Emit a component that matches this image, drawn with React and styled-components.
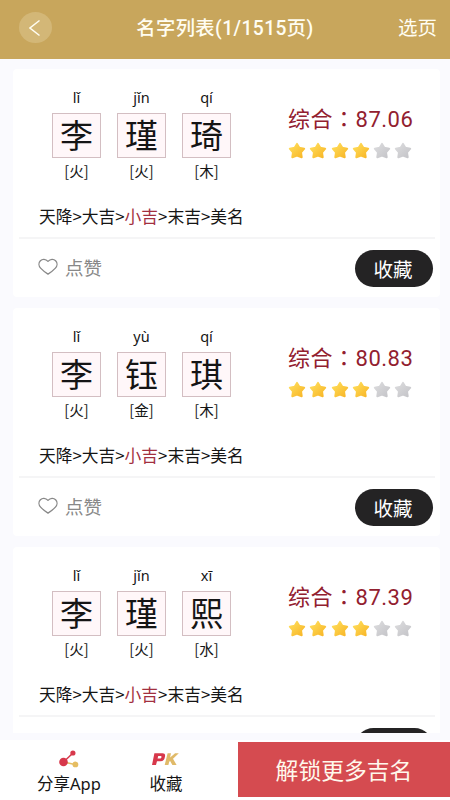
import React from 'react';
import styled, { createGlobalStyle } from 'styled-components';

const Global = createGlobalStyle`
  * { box-sizing: border-box; }
  body {
    margin: 0;
    background: #fff;
    font-family: "Noto Sans", "Noto Sans CJK SC", sans-serif;
    color: #151515;
  }
`;

const Page = styled.div`
  width: 450px;
  height: 800px;
  display: flex;
  flex-direction: column;
  overflow: hidden;
  background: #fafafe;
`;

const Header = styled.header`
  flex: none;
  height: 59px;
  padding: 0 13px 4px 19px;
  display: grid;
  grid-template-columns: 80px 1fr 80px;
  align-items: center;
  background: #c8a65c;
  color: #fffdf2;
  font-family: Roboto, "Noto Sans CJK SC", sans-serif;
  white-space: nowrap;
`;

const Back = styled.button`
  width: 33px;
  height: 31px;
  padding: 0;
  border: 0;
  border-radius: 50%;
  display: grid;
  place-items: center;
  background: #d3b777;
`;

const Title = styled.h1`
  margin: 2px 6px 0 0;
  text-align: center;
  font-size: 19.3px;
  font-weight: 500;
  line-height: 28px;
  letter-spacing: 0.4px;
`;

const PagePick = styled.span`
  margin-top: 2px;
  text-align: right;
  font-size: 19.5px;
  line-height: 28px;
`;

const List = styled.main`
  flex: none;
  height: 674px;
  padding: 10px 10px 0 13px;
  display: flex;
  flex-direction: column;
  gap: 11px;
  overflow: hidden;
`;

const Card = styled.article`
  flex: none;
  height: 228px;
  padding: 0 5px 0 6px;
  border-radius: 4px;
  background: #fff;
`;

const Summary = styled.div`
  height: 135px;
  padding: 18px 0 0 33px;
  display: flex;
`;

const Characters = styled.div`
  display: flex;
  gap: 16px;
`;

const Character = styled.div`
  width: 49px;
  display: flex;
  flex-direction: column;
  align-items: center;
`;

const Pinyin = styled.span`
  height: 26px;
  font-size: 14.5px;
  line-height: 20px;
`;

const Glyph = styled.div`
  width: 49px;
  height: 45px;
  border: 1px solid #d3bec2;
  background: #fff7f9;
  text-align: center;
  font-size: 33px;
  line-height: 44px;
`;

const Element = styled.span`
  font-family: "Noto Sans CJK SC", sans-serif;
  font-size: 14.5px;
  line-height: 26px;
`;

const Rating = styled.div`
  margin-left: 57px;
  padding-top: 14px;
  white-space: nowrap;
`;

const Score = styled.div`
  font-family: Roboto, "Noto Sans CJK SC", sans-serif;
  font-size: 22px;
  line-height: 32px;
  color: #92202f;
  letter-spacing: 0.5px;
`;

const Colon = styled.span`
  font-family: "Noto Sans CJK TC", sans-serif;
`;

const Stars = styled.div`
  margin-top: 6px;
  display: flex;
  gap: 3.3px;
`;

const Levels = styled.div`
  height: 33px;
  padding-left: 20px;
  font-family: "Noto Sans CJK SC", sans-serif;
  font-size: 16.75px;
  line-height: 24px;
  white-space: nowrap;
`;

const Current = styled.span`
  color: #a2303f;
`;

const Actions = styled.div`
  height: 60px;
  padding: 0 2px 0 19px;
  border-top: 2px solid #f5f5f6;
  display: flex;
  align-items: center;
  justify-content: space-between;
`;

const Like = styled.div`
  display: flex;
  align-items: center;
  gap: 7px;
  font-size: 18.5px;
  line-height: 26px;
  color: #888;

  svg { margin-bottom: 3px; }
`;

const SaveButton = styled.button`
  width: 78px;
  height: 37px;
  padding: 0 2px 0 0;
  border: 0;
  border-radius: 19px;
  background: #242324;
  color: #fff;
  font: 400 19.5px/35px "Noto Sans CJK SC", sans-serif;
`;

const Footer = styled.footer`
  flex: none;
  height: 67px;
  padding-top: 9px;
  display: flex;
  background: linear-gradient(#fafafe 7px, #fff 7px);
`;

const Tab = styled.div`
  width: ${(p) => p.$width}px;
  display: flex;
  flex-direction: column;
  align-items: center;
  font-size: 16.5px;
  line-height: 24px;
  white-space: nowrap;

  svg { margin: 8px 0 4px; }
`;

const Unlock = styled.button`
  margin-left: auto;
  width: 212px;
  height: 55px;
  padding: 0;
  border: 0;
  background: #d54b50;
  color: #fff8ec;
  font: 400 22.8px/55px "Noto Sans CJK SC", sans-serif;
`;

function Star({ on }) {
  return (
    <svg width="18" height="17" viewBox="0 0 18 17">
      <defs>
        <linearGradient id={on ? 'gold' : 'silver'} x1="0" y1="0" x2="1" y2="1">
          <stop offset="0" stopColor={on ? '#ffdf5c' : '#dcdcde'} />
          <stop offset="1" stopColor={on ? '#f8b526' : '#c4c4c8'} />
        </linearGradient>
      </defs>
      <path
        d="M9 1.9 L11.3 5.8 L16.2 6.7 L13 10.4 L13.7 15.2 L9 13.5 L4.3 15.2 L5 10.4 L1.8 6.7 L6.7 5.8 Z"
        fill={on ? 'url(#gold)' : 'url(#silver)'}
        stroke={on ? 'url(#gold)' : 'url(#silver)'}
        strokeWidth="2"
        strokeLinejoin="round"
      />
    </svg>
  );
}

function Heart() {
  return (
    <svg width="20" height="18" viewBox="0 0 20 18" fill="none" stroke="#888" strokeWidth="1.3" strokeLinejoin="round">
      <path d="M10 3.4 C7.6 0.8 4.4 0.7 2.4 2.7 C0.3 4.9 0.7 8.1 2.6 10.1 C4.5 12.1 7.3 14.5 10 16.1 C12.7 14.5 15.5 12.1 17.4 10.1 C19.3 8.1 19.7 4.9 17.6 2.7 C15.6 0.7 12.4 0.8 10 3.4 Z" />
    </svg>
  );
}

function ShareIcon() {
  return (
    <svg width="20" height="18" viewBox="0 0 20 18">
      <path d="M4.5 12 L14 3" stroke="#d7384b" strokeWidth="1.5" />
      <path d="M4.5 12 L16 14.5" stroke="#e5bd62" strokeWidth="1.4" />
      <circle cx="4.5" cy="12" r="4.3" fill="#d7384b" />
      <circle cx="13.9" cy="3" r="2.6" fill="#d7384b" />
      <circle cx="16.4" cy="14.4" r="2.9" fill="#e5bd62" />
    </svg>
  );
}

function PkIcon() {
  return (
    <svg width="28" height="18" viewBox="0 0 28 18">
      <path fillRule="evenodd" fill="#d7384b" d="M2.4 3.2 H10.4 Q13.6 3.2 13 6.4 Q12.4 11 8.6 11.2 H5 L4 15 H0 Z M6.2 6.1 L5.6 8.5 H8.4 Q9.4 8.2 9.5 7 Q9.6 6.1 8.8 6.1 Z" />
      <path fill="#e0ba69" d="M15.6 3.2 H19 L18.1 7.5 L23.1 3.2 H26.8 L21 8.8 L24.6 15 H20.4 L18.1 11 L17.2 11.8 L16.4 15 H12.7 Z" />
    </svg>
  );
}

const names = [
  { chars: [['lǐ', '李', '火'], ['jǐn', '瑾', '火'], ['qí', '琦', '木']], score: '87.06' },
  { chars: [['lǐ', '李', '火'], ['yù', '钰', '金'], ['qí', '琪', '木']], score: '80.83' },
  { chars: [['lǐ', '李', '火'], ['jǐn', '瑾', '火'], ['xī', '熙', '水']], score: '87.39' },
];

function NameCard({ chars, score }) {
  return (
    <Card>
      <Summary>
        <Characters>
          {chars.map(([pinyin, glyph, element]) => (
            <Character key={glyph}>
              <Pinyin>{pinyin}</Pinyin>
              <Glyph>{glyph}</Glyph>
              <Element>[{element}]</Element>
            </Character>
          ))}
        </Characters>
        <Rating>
          <Score>综合<Colon lang="zh-TW">：</Colon>{score}</Score>
          <Stars>
            {[0, 1, 2, 3, 4, 5].map((i) => <Star key={i} on={i < 4} />)}
          </Stars>
        </Rating>
      </Summary>
      <Levels>天降&gt;大吉&gt;<Current>小吉</Current>&gt;末吉&gt;美名</Levels>
      <Actions>
        <Like><Heart />点赞</Like>
        <SaveButton>收藏</SaveButton>
      </Actions>
    </Card>
  );
}

export default function App() {
  return (
    <Page lang="zh-CN">
      <Global />
      <Header>
        <Back aria-label="返回">
          <svg width="14" height="18" viewBox="0 0 14 18" fill="none" stroke="#fffdf2" strokeWidth="1.5">
            <path d="M10.5 1.5 L1 9 L10.5 16.5" />
          </svg>
        </Back>
        <Title>名字列表(1/1515页)</Title>
        <PagePick>选页</PagePick>
      </Header>
      <List>
        {names.map((n) => <NameCard key={n.score} {...n} />)}
      </List>
      <Footer>
        <Tab $width={138}><ShareIcon />分享App</Tab>
        <Tab $width={56}><PkIcon />收藏</Tab>
        <Unlock>解锁更多吉名</Unlock>
      </Footer>
    </Page>
  );
}
